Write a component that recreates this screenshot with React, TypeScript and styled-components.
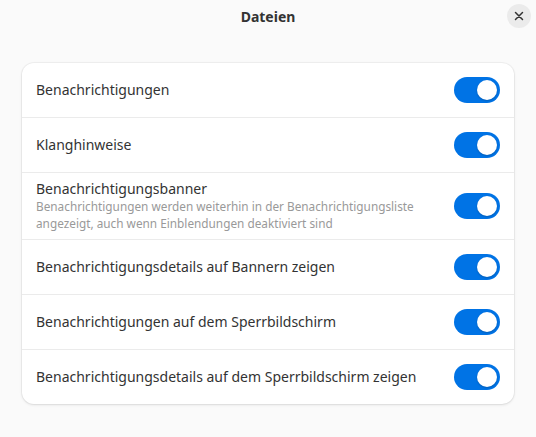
import React from 'react'
import styled, { createGlobalStyle } from 'styled-components'

const GlobalStyle = createGlobalStyle`
  html, body {
    margin: 0;
    padding: 0;
    background: #fafafa;
  }
  body {
    font-family: 'Noto Sans', 'Open Sans', sans-serif;
    color: #2e2e2e;
    -webkit-font-smoothing: antialiased;
  }
`

const Window = styled.div`
  width: 536px;
  height: 437px;
  background: #fafafa;
  display: flex;
  flex-direction: column;
`

const HeaderBar = styled.header`
  position: relative;
  height: 33px;
  display: flex;
  align-items: center;
  justify-content: center;
`

const Title = styled.h1`
  margin: 0;
  font-size: 14px;
  font-weight: 700;
  color: #333;
`

const CloseButton = styled.button`
  position: absolute;
  right: 5px;
  top: 4px;
  width: 24px;
  height: 24px;
  border: none;
  border-radius: 50%;
  background: #ebebeb;
  display: flex;
  align-items: center;
  justify-content: center;
  padding: 0;
  cursor: pointer;
`

const Content = styled.main`
  padding: 30px 22px 0;
`

const Card = styled.section`
  background: #fff;
  border-radius: 12px;
  box-shadow: 0 0 0 1px rgba(0, 0, 0, 0.04), 0 1px 3px rgba(0, 0, 0, 0.1);
  overflow: hidden;
`

const Row = styled.div<{ hasSubtitle?: boolean }>`
  display: flex;
  align-items: center;
  justify-content: space-between;
  gap: 12px;
  min-height: ${({ hasSubtitle }) => (hasSubtitle ? '66px' : '54px')};
  padding: 0 14px;
  box-sizing: content-box;
  & + & {
    border-top: 1px solid #ebebeb;
  }
`

const Labels = styled.div`
  display: flex;
  flex-direction: column;
`

const Label = styled.span`
  font-size: 14px;
  line-height: 18px;
  color: #333;
`

const Subtitle = styled.span`
  font-size: 11.8px;
  line-height: 17px;
  color: #999;
`

const Switch = styled.div<{ on: boolean }>`
  flex: none;
  width: 46px;
  height: 26px;
  border-radius: 13px;
  background: ${({ on }) => (on ? '#0073e5' : '#d0d0d0')};
  position: relative;
`

const Knob = styled.div<{ on: boolean }>`
  position: absolute;
  top: 3px;
  left: ${({ on }) => (on ? '23px' : '3px')};
  width: 20px;
  height: 20px;
  border-radius: 50%;
  background: #fff;
  box-shadow: 0 1px 2px rgba(0, 0, 0, 0.2);
`

const rows = [
  { title: 'Benachrichtigungen' },
  { title: 'Klanghinweise' },
  {
    title: 'Benachrichtigungsbanner',
    subtitle:
      'Benachrichtigungen werden weiterhin in der Benachrichtigungsliste angezeigt, auch wenn Einblendungen deaktiviert sind',
  },
  { title: 'Benachrichtigungsdetails auf Bannern zeigen' },
  { title: 'Benachrichtigungen auf dem Sperrbildschirm' },
  { title: 'Benachrichtigungsdetails auf dem Sperrbildschirm zeigen' },
]

export default function App() {
  return (
    <Window>
      <GlobalStyle />
      <HeaderBar>
        <Title>Dateien</Title>
        <CloseButton aria-label="Schließen">
          <svg width="10" height="10" viewBox="0 0 10 10">
            <path d="M1.5 1.5 L8.5 8.5 M8.5 1.5 L1.5 8.5" stroke="#333" strokeWidth="1.5" strokeLinecap="round" />
          </svg>
        </CloseButton>
      </HeaderBar>
      <Content>
        <Card>
          {rows.map((row) => (
            <Row key={row.title} hasSubtitle={!!row.subtitle}>
              <Labels>
                <Label>{row.title}</Label>
                {row.subtitle && <Subtitle>{row.subtitle}</Subtitle>}
              </Labels>
              <Switch on>
                <Knob on />
              </Switch>
            </Row>
          ))}
        </Card>
      </Content>
    </Window>
  )
}
